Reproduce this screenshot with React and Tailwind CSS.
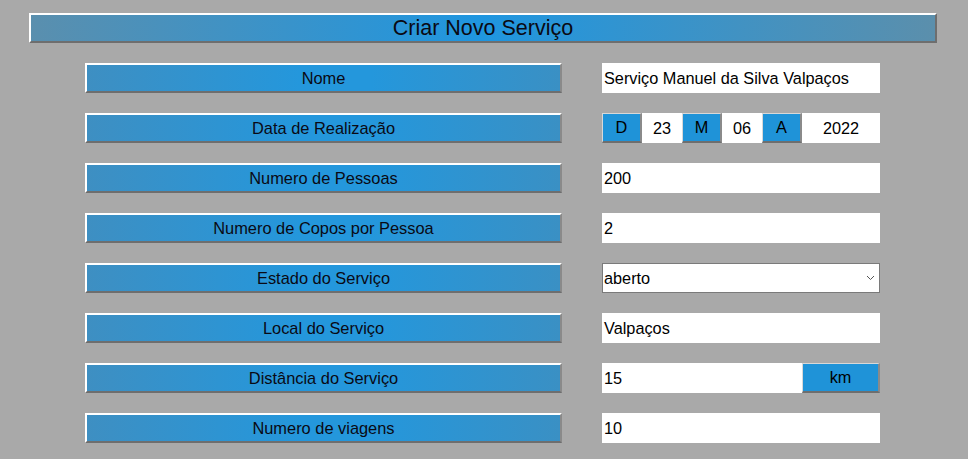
import React from 'react';

const labelCls =
    'w-[477px] h-[30px] flex items-center justify-center border-t-2 border-l-2 border-t-white border-l-white border-b-2 border-r-2 border-b-[#6e6e6e] border-r-[#8a8a8a] bg-[linear-gradient(to_right,#3e8fc2,#2497dc_45%,#2497dc_60%,#3a90c4)] text-[16.4px] text-[#0a0a14]';

const boxCls = 'w-[278px] h-[30px] bg-white flex items-center pl-[2px] text-[16.3px] text-black';

const smallBtn =
    'w-[40px] h-[30px] flex items-center justify-center bg-[#1f93d8] border-t border-l border-t-[#d8d8d8] border-l-[#d8d8d8] border-b-2 border-r-2 border-b-[#6e6e6e] border-r-[#8a8a8a] text-[16.3px] text-black';

const Row = ({ label, children }) => (
    <div className="flex items-center pl-[85px] gap-[40px]">
        <div className={labelCls}>{label}</div>
        {children}
    </div>
);

const App = () => {
    return (
        <div className="w-[968px] h-[459px] bg-[#a9a9a9] pt-[13px] font-['Liberation_Sans',Arial,sans-serif] overflow-hidden">
            <div className="ml-[29px] w-[908px] h-[30px] flex items-center justify-center border-t-2 border-l-2 border-t-white border-l-white border-b-2 border-r-2 border-b-[#6e6e6e] border-r-[#6e6e6e] bg-[linear-gradient(to_right,#5a8fae,#1f96e0_50%,#5b8fac)] text-[21.5px] text-[#0a0a14]">
                Criar Novo Serviço
            </div>
            <div className="flex flex-col gap-[20px] mt-[20px]">
                <Row label="Nome">
                    <div className={boxCls}>Serviço Manuel da Silva Valpaços</div>
                </Row>
                <Row label="Data de Realização">
                    <div className="flex w-[278px] h-[30px] text-[16.3px]">
                        <div className={smallBtn}>D</div>
                        <div className="w-[40px] h-[30px] bg-white flex items-center justify-center">23</div>
                        <div className={smallBtn}>M</div>
                        <div className="w-[40px] h-[30px] bg-white flex items-center justify-center">06</div>
                        <div className={smallBtn}>A</div>
                        <div className="flex-1 h-[30px] bg-white flex items-center justify-center">2022</div>
                    </div>
                </Row>
                <Row label="Numero de Pessoas">
                    <div className={boxCls}>200</div>
                </Row>
                <Row label="Numero de Copos por Pessoa">
                    <div className={boxCls}>2</div>
                </Row>
                <Row label="Estado do Serviço">
                    <div className="w-[278px] h-[30px] bg-white border border-[#7a7a7a] flex items-center justify-between pl-[1px] pr-[4px] text-[16.3px] text-black">
                        <span>aberto</span>
                        <svg width="9" height="6" viewBox="0 0 9 6" fill="none">
                            <path d="M1 1l3.5 3.5L8 1" stroke="#555" strokeWidth="1" />
                        </svg>
                    </div>
                </Row>
                <Row label="Local do Serviço">
                    <div className={boxCls}>Valpaços</div>
                </Row>
                <Row label="Distância do Serviço">
                    <div className="flex w-[278px] h-[30px] text-[16.3px]">
                        <div className="w-[200px] h-[30px] bg-white flex items-center pl-[2px]">15</div>
                        <div className="flex-1 h-[30px] flex items-center justify-center bg-[#1f93d8] border-t border-l border-t-[#d8d8d8] border-l-[#d8d8d8] border-b-2 border-r-2 border-b-[#6e6e6e] border-r-[#8a8a8a]">
                            km
                        </div>
                    </div>
                </Row>
                <Row label="Numero de viagens">
                    <div className={boxCls}>10</div>
                </Row>
            </div>
        </div>
    );
};

export default App;
